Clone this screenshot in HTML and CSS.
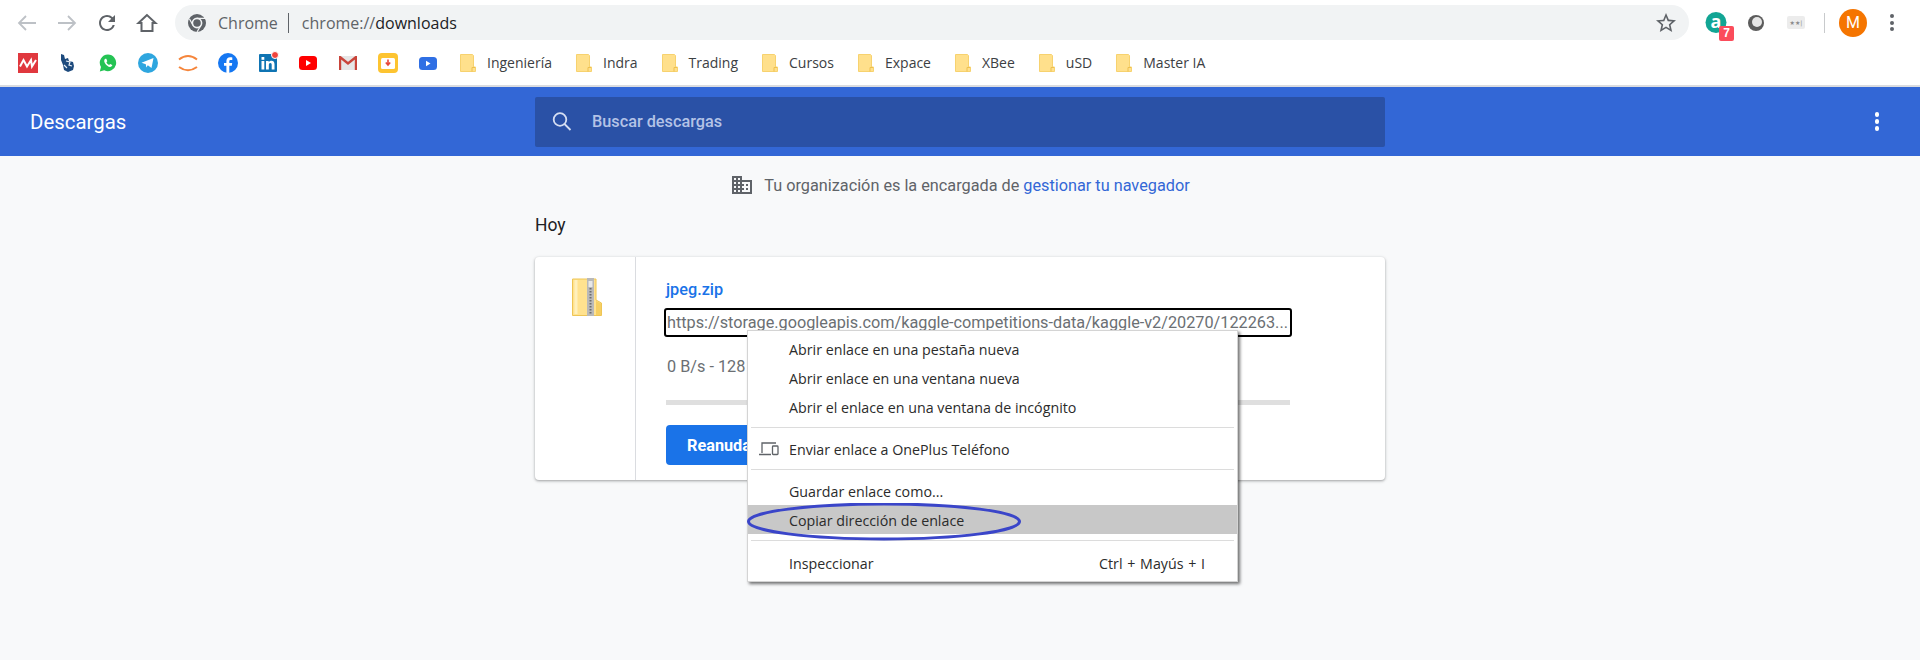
FILE: index.html
```html
<!DOCTYPE html>
<html lang="es">
<head>
  <meta charset="UTF-8" />
  <title>Descargas</title>
  <link rel="stylesheet" href="styles.css">
</head>
<body>
  <div class="toolbar">
    <div class="nav-btn"><svg width="24" height="24" viewBox="0 0 24 24" class="line-off"><path d="M21 12H4M11 5l-7 7 7 7"/></svg></div>
    <div class="nav-btn"><svg width="24" height="24" viewBox="0 0 24 24" class="line-off"><path d="M3 12h17M13 5l7 7-7 7"/></svg></div>
    <div class="nav-btn"><svg width="24" height="24" viewBox="0 0 24 24" fill="#5f6368"><path d="M17.65 6.35A7.958 7.958 0 0 0 12 4c-4.42 0-7.99 3.58-7.99 8s3.57 8 7.99 8c3.73 0 6.84-2.55 7.73-6h-2.08A5.99 5.99 0 0 1 12 18c-3.31 0-6-2.69-6-6s2.69-6 6-6c1.66 0 3.14.69 4.22 1.78L13 11h7V4l-2.35 2.35z"/></svg></div>
    <div class="nav-btn"><svg width="24" height="24" viewBox="0 0 24 24" class="line-on"><path d="M12 4L3.5 12H6.5V20H17.5V12H20.5Z"/></svg></div>

    <div class="omnibox">
      <svg width="20" height="20" viewBox="0 0 20 20"><circle cx="10" cy="10" r="9" fill="#5f6368"/><circle cx="10" cy="10" r="4.6" fill="none" stroke="#f1f3f4" stroke-width="1.6"/><path d="M10 5.4h8M6 12.3L2.5 6M13.9 12.4L10 19" stroke="#f1f3f4" stroke-width="1.2"/></svg>
      <span class="omni-chip">Chrome</span>
      <span class="omni-sep"></span>
      <span class="omni-url">chrome://<b>downloads</b></span>
      <svg class="omni-star" width="24" height="24" viewBox="0 0 24 24" fill="#5f6368"><path d="M22 9.24l-7.19-.62L12 2 9.19 8.63 2 9.24l5.46 4.73L5.82 21 12 17.27 18.18 21l-1.63-7.03L22 9.24zM12 15.4l-3.76 2.27 1-4.28-3.32-2.88 4.38-.38L12 6.1l1.71 4.04 4.38.38-3.32 2.88 1 4.28L12 15.4z"/></svg>
    </div>

    <div class="ext">
      <svg width="24" height="24" viewBox="0 0 24 24"><circle cx="12" cy="11.500" r="10.500" fill="#12a594"/><text x="12" y="16.500" text-anchor="middle" class="ext-a">a</text></svg>
      <span class="ext-badge">7</span>
    </div>
    <div class="ext">
      <svg width="20" height="20" viewBox="0 0 20 20"><circle cx="10" cy="10" r="8" fill="#5c5c5c"/><circle cx="11" cy="9" r="5" fill="#e6e6e6"/></svg>
    </div>
    <div class="ext">
      <span class="ext-rate">★★|</span>
    </div>
    <span class="tool-sep"></span>
    <span class="avatar">M</span>
    <div class="dots-dark"><i></i><i></i><i></i></div>
  </div>

  <div class="bookmarks">
    <div class="bm"><svg width="20" height="20" viewBox="0 0 20 20"><rect width="20" height="20" fill="#e0383e"/><path d="M2 13.500L5.500 7 9 13.500 13 7l1 6.500L18 7" fill="none" stroke="#fff" stroke-width="2"/></svg></div>
    <div class="bm"><svg width="20" height="20" viewBox="0 0 20 20"><path d="M3 1l3 1 1 4 3-1 1 3 4 1 1 4-1 4-5 2-4-2-1-5-2-5z" fill="#1d4a7d"/><path d="M8 8l4 1-1 3 3 1M6 12l3 3" stroke="#e8eef5" stroke-width="1.2" fill="none"/></svg></div>
    <div class="bm"><svg width="20" height="20" viewBox="0 0 20 20"><path d="M10 1.500a8.300 8.300 0 0 0-7 12.600L1.800 18.500l4.500-1.200A8.300 8.300 0 1 0 10 1.500z" fill="#25c354"/><path d="M7.300 5.800c-1.400.8-1.400 2.700-.3 4.500 1.200 2 3.200 3.700 5 3.700 1.300 0 2.300-.8 2.300-1.900l-2.200-1.200-1 1c-1-.3-2.200-1.500-2.700-2.700l.9-1L8.300 5.800z" fill="#fff"/></svg></div>
    <div class="bm"><svg width="20" height="20" viewBox="0 0 20 20"><circle cx="10" cy="10" r="10" fill="#2ea6df"/><path d="M3.500 9.800L15.500 5 13.500 15 9.800 12.300 8.300 14.500 7.800 11.300z" fill="#fff"/></svg></div>
    <div class="bm"><svg width="20" height="20" viewBox="0 0 20 20" fill="none" stroke="#f5853b" stroke-width="2"><path d="M1 6.500Q10 -.5 19 6.500M1 14Q10 20.500 19 14"/></svg></div>
    <div class="bm"><svg width="20" height="20" viewBox="0 0 20 20"><circle cx="10" cy="10" r="10" fill="#1577f2"/><path d="M11.300 20v-7.200h2.500l.4-2.800h-2.900V8.300c0-.9.4-1.400 1.500-1.400h1.500V4.400c-.5-.1-1.300-.2-2.200-.2-2.200 0-3.700 1.300-3.700 3.800V10H6v2.800h2.400V20z" fill="#fff"/></svg></div>
    <div class="bm"><span class="bm-rel"><svg width="18" height="18" viewBox="0 0 18 18"><rect width="18" height="18" rx="1" fill="#0f74b3"/><rect x="2.500" y="7" width="2.800" height="8.500" fill="#fff"/><rect x="2.500" y="3" width="2.800" height="2.800" fill="#fff"/><path d="M7 7h2.700v1.300C10.300 7.300 11.300 6.800 12.500 6.800c2.200 0 3 1.400 3 3.700v5h-2.800V11c0-1.200-.4-1.900-1.400-1.900S9.800 9.900 9.800 11v4.500H7z" fill="#fff"/></svg><i class="bm-dot"></i></span></div>
    <div class="bm"><svg width="18" height="14" viewBox="0 0 18 14"><rect width="18" height="14" rx="3.500" fill="#f00"/><path d="M7 4l5 3-5 3z" fill="#fff"/></svg></div>
    <div class="bm"><svg width="18" height="14" viewBox="0 0 18 14"><rect width="18" height="14" fill="#e6e6e6"/><path d="M1 14V1l8 6.500L17 1v13" fill="none" stroke="#c9443a" stroke-width="2.400"/></svg></div>
    <div class="bm"><svg width="20" height="20" viewBox="0 0 20 20"><rect width="20" height="20" rx="4" fill="#fdc431"/><rect x="3" y="5" width="14" height="11" rx="1.500" fill="#fff"/><path d="M10 6.500v4.500M7.800 9.500l2.200 2.500 2.200-2.500" fill="none" stroke="#e8483a" stroke-width="1.600"/></svg></div>
    <div class="bm"><svg width="18" height="13" viewBox="0 0 18 13"><rect width="18" height="13" rx="3.500" fill="#2f6fe4"/><path d="M7 3.800l4.500 2.700L7 9.200z" fill="#fff"/></svg></div>

    <div class="bm-folder"><svg class="folder" width="16" height="18" viewBox="0 0 16 18"><use href="#folder-shape"/></svg><span class="bm-label">Ingeniería</span></div>
    <div class="bm-folder"><svg class="folder" width="16" height="18" viewBox="0 0 16 18"><use href="#folder-shape"/></svg><span class="bm-label">Indra</span></div>
    <div class="bm-folder"><svg class="folder" width="16" height="18" viewBox="0 0 16 18"><use href="#folder-shape"/></svg><span class="bm-label">Trading</span></div>
    <div class="bm-folder"><svg class="folder" width="16" height="18" viewBox="0 0 16 18"><use href="#folder-shape"/></svg><span class="bm-label">Cursos</span></div>
    <div class="bm-folder"><svg class="folder" width="16" height="18" viewBox="0 0 16 18"><use href="#folder-shape"/></svg><span class="bm-label">Expace</span></div>
    <div class="bm-folder"><svg class="folder" width="16" height="18" viewBox="0 0 16 18"><use href="#folder-shape"/></svg><span class="bm-label">XBee</span></div>
    <div class="bm-folder"><svg class="folder" width="16" height="18" viewBox="0 0 16 18"><use href="#folder-shape"/></svg><span class="bm-label">uSD</span></div>
    <div class="bm-folder"><svg class="folder" width="16" height="18" viewBox="0 0 16 18"><use href="#folder-shape"/></svg><span class="bm-label">Master IA</span></div>
  </div>

  <svg width="0" height="0" class="defs">
    <g id="folder-shape">
      <path d="M.5.500h12l1 1V13h2v4.500H.5z" fill="#ffe08c" stroke="#f7d26f"/>
      <path d="M12 17.500V13.500h3" fill="none" stroke="#eec04f"/>
    </g>
  </svg>

  <header class="dl-header">
    <div class="dl-title">Descargas</div>
    <div class="dl-search">
      <svg width="22" height="22" viewBox="0 0 22 22" fill="none" stroke="#d5def2" stroke-width="1.800"><circle cx="9" cy="8.500" r="6.300"/><path d="M13.500 13l6 6"/></svg>
      <span>Buscar descargas</span>
    </div>
    <div class="dots-light"><i></i><i></i><i></i></div>
  </header>

  <main class="dl-main">
    <div class="managed">
      <svg width="24" height="24" viewBox="0 0 24 24" fill="#5f6368"><path d="M12 7V3H2v18h20V7H12zM6 19H4v-2h2v2zm0-4H4v-2h2v2zm0-4H4V9h2v2zm0-4H4V5h2v2zm4 12H8v-2h2v2zm0-4H8v-2h2v2zm0-4H8V9h2v2zm0-4H8V5h2v2zm10 12h-8v-2h2v-2h-2v-2h2v-2h-2V9h8v10zm-2-8h-2v2h2v-2zm0 4h-2v2h2v-2z"/></svg>
      <span>Tu organización es la encargada de <a href="#">gestionar tu navegador</a></span>
    </div>

    <h2 class="day">Hoy</h2>

    <div class="card">
      <div class="card-icon">
        <svg width="30" height="38" viewBox="0 0 30 38">
          <path d="M.5 1h23.500v21l5.500 3v12.500H.5z" fill="#ffe28f" stroke="#eec555"/>
          <path d="M4 2v34" stroke="#fff0bd" stroke-width="3"/>
          <path d="M24 23l5 2.500v11.500h-5z" fill="#f6cf62"/>
          <rect x="15" y="0" width="7" height="38" fill="#b9b9b9"/>
          <rect x="16.500" y="3" width="4" height="6" fill="#e8e8e8"/>
          <path d="M18.500 10v27" stroke="#6d6d6d" stroke-width="2" stroke-dasharray="1.500 1.500"/>
        </svg>
      </div>
      <div class="card-body">
        <a class="file-name" href="#">jpeg.zip</a>
        <div class="file-url">https://storage.googleapis.com/kaggle-competitions-data/kaggle-v2/20270/122263...</div>
        <div class="file-status">0 B/s - 128 MB de 1,9 GB</div>
        <div class="progress"></div>
        <button class="resume">Reanudar</button>
      </div>
    </div>
  </main>

  <div class="ctx-menu">
    <div class="ctx-item">Abrir enlace en una pestaña nueva</div>
    <div class="ctx-item">Abrir enlace en una ventana nueva</div>
    <div class="ctx-item">Abrir el enlace en una ventana de incógnito</div>
    <div class="ctx-sep"></div>
    <div class="ctx-item">
      <svg class="ctx-icon" width="20" height="16" viewBox="0 0 20 16" fill="none" stroke="#5f6368" stroke-width="1.300"><path d="M3 12V2h14M0 13.500h12"/><rect x="13.500" y="5" width="5.500" height="8.500" rx=".8"/></svg>
      Enviar enlace a OnePlus Teléfono
    </div>
    <div class="ctx-sep"></div>
    <div class="ctx-item">Guardar enlace como...</div>
    <div class="ctx-item ctx-active">Copiar dirección de enlace</div>
    <div class="ctx-sep"></div>
    <div class="ctx-item ctx-split"><span>Inspeccionar</span><span class="ctx-keys">Ctrl + Mayús + I</span></div>
    <svg class="ctx-mark" width="276" height="40" viewBox="0 0 276 40"><ellipse cx="137" cy="18.500" rx="135.500" ry="17.500" fill="none" stroke="#3a45c9" stroke-width="3"/></svg>
  </div>
</body>
</html>
```

FILE: styles.css
```css
html, body {
  margin: 0;
  height: 660px;
  overflow: hidden;
}
body {
  background: #f8f9fa;
  font-family: "Open Sans", sans-serif;
  color: #202124;
  position: relative;
}
svg {
  display: block;
  flex: none;
}
.defs {
  position: absolute;
}

/* barra de chrome */
.toolbar {
  height: 45px;
  background: #fff;
  display: flex;
  align-items: center;
  padding: 0 26px 0 7px;
}
.nav-btn {
  width: 40px;
  height: 40px;
  display: flex;
  align-items: center;
  justify-content: center;
}
.line-off path, .line-on path {
  fill: none;
  stroke-width: 1.8;
}
.line-off path {
  stroke: #bdc1c6;
}
.line-on path {
  stroke: #5f6368;
  stroke-width: 2;
}
.omnibox {
  flex: 1;
  height: 35px;
  margin: 0 7px 0 8px;
  background: #f1f3f4;
  border-radius: 18px;
  display: flex;
  align-items: center;
  padding-left: 12px;
  font-size: 16px;
}
.omni-chip {
  margin-left: 11px;
  color: #5f6368;
}
.omni-sep {
  width: 1px;
  height: 20px;
  background: #5f6368;
  margin: 0 13px 0 10px;
}
.omni-url {
  color: #5f6368;
}
.omni-url b {
  font-weight: 400;
  color: #202124;
}
.omni-star {
  margin-left: auto;
  margin-right: 11px;
}
.ext {
  width: 40px;
  height: 40px;
  display: flex;
  align-items: center;
  justify-content: center;
  position: relative;
}
.ext-a {
  font-family: "Open Sans", sans-serif;
  font-size: 18px;
  font-weight: 700;
  fill: #fff;
}
.ext-badge {
  position: absolute;
  left: 23px;
  top: 23px;
  width: 15px;
  height: 15px;
  border-radius: 2px;
  background: #fb4c5b;
  color: #fff;
  font: 700 12px/15px "Liberation Sans", sans-serif;
  text-align: center;
}
.ext-rate {
  width: 18px;
  height: 13px;
  background: #ececec;
  border-radius: 2px;
  color: #8a8a8a;
  font: 6px/13px "DejaVu Sans", sans-serif;
  text-align: center;
  white-space: nowrap;
}
.tool-sep {
  width: 1px;
  height: 20px;
  background: #c8cacc;
  margin: 0 14px 0 8px;
}
.avatar {
  width: 28px;
  height: 28px;
  border-radius: 50%;
  background: #f57500;
  color: #fff;
  font: 16px/28px Roboto, sans-serif;
  text-align: center;
}
.dots-dark, .dots-light {
  display: flex;
  flex-direction: column;
}
.dots-dark {
  margin-left: 23px;
  gap: 2.500px;
}
.dots-dark i {
  width: 4px;
  height: 4px;
  border-radius: 50%;
  background: #5f6368;
}

/* marcadores */
.bookmarks {
  height: 36px;
  padding: 0 0 4px 8px;
  background: #fff;
  display: flex;
  align-items: center;
  font-size: 14px;
  color: #3c4043;
}
.bm {
  width: 40px;
  display: flex;
  justify-content: center;
}
.bm-rel {
  position: relative;
}
.bm-dot {
  position: absolute;
  right: -2px;
  top: -3px;
  width: 6px;
  height: 6px;
  border-radius: 50%;
  background: #f0443c;
  border: 1px solid #fff;
}
.bm-folder {
  display: flex;
  align-items: center;
  padding: 0 12px;
  gap: 11px;
}
.bm-label {
  padding-bottom: 2px;
}

/* cabecera descargas */
.dl-header {
  border-top: 2px solid #dadce0;
  height: 69px;
  background: #3367d6;
  display: flex;
  align-items: center;
  justify-content: space-between;
  padding: 0 41px 0 30px;
}
.dl-title {
  width: 505px;
  color: #fff;
  font: 20.400px Roboto, sans-serif;
}
.dl-search {
  width: 850px;
  height: 50px;
  box-sizing: border-box;
  background: #2a51a6;
  border-radius: 2px;
  display: flex;
  align-items: center;
  padding-left: 16px;
  gap: 19px;
  color: #b4c3e6;
  font: 500 16.250px Roboto, sans-serif;
  margin-right: auto;
}
.dots-light {
  gap: 2.500px;
}
.dots-light i {
  width: 4.500px;
  height: 4.500px;
  border-radius: 50%;
  background: #fff;
}

/* contenido */
.dl-main {
  width: 850px;
  margin: 0 auto;
  font-family: Roboto, sans-serif;
}
.managed {
  height: 58px;
  display: flex;
  align-items: center;
  justify-content: center;
  gap: 10px;
  font-size: 16.250px;
  color: #5f6368;
}
.managed a {
  color: #3367d6;
  text-decoration: none;
}
.day {
  margin: 0;
  height: 43px;
  font-size: 17.500px;
  font-weight: 400;
  line-height: 22px;
  color: #202124;
}
.card {
  height: 223px;
  background: #fff;
  border-radius: 4px;
  box-shadow: 0 1px 2px rgba(60, 64, 67, .3), 0 1px 3px 1px rgba(60, 64, 67, .15);
  display: flex;
}
.card-icon {
  border-right: 1px solid #dadce0;
  padding: 21px 0 0 37px;
  box-sizing: border-box;
  flex: none;
  width: 101px;
}
.card-body {
  padding: 22px 0 0 30px;
  width: 640px;
}
.file-name {
  display: block;
  height: 29px;
  line-height: 22px;
  font-size: 16.250px;
  font-weight: 500;
  color: #1a73e8;
  text-decoration: none;
}
.file-url {
  width: 628px;
  height: 29px;
  margin-left: -2px;
  box-sizing: border-box;
  border: 2px solid #000;
  border-radius: 3px;
  font: 16.250px/25px Roboto, sans-serif;
  color: #6b6f73;
  white-space: nowrap;
  overflow: hidden;
  padding-left: 1px;
}
.file-status {
  margin-top: 20px;
  height: 20px;
  line-height: 20px;
  font-size: 16.250px;
  color: #6b6f73;
  padding-left: 1px;
}
.progress {
  margin-top: 23px;
  height: 5px;
  width: 624px;
  background: #dfdfdf;
}
.resume {
  display: block;
  margin-top: 20px;
  height: 40px;
  border: 0;
  border-radius: 4px;
  background: #1a73e8;
  color: #fff;
  font: 700 16.250px Roboto, sans-serif;
  padding: 0 21px;
}

/* menu contextual */
.ctx-menu {
  position: absolute;
  left: 747px;
  top: 330px;
  width: 491px;
  height: 252px;
  box-sizing: border-box;
  background: #fff;
  border: 1px solid #d4d4d4;
  box-shadow: 2px 2px 3px rgba(0, 0, 0, .55);
  padding: 3px 0 5px;
  font-size: 14.250px;
  color: #2b2b2b;
}
.ctx-item {
  height: 29px;
  box-sizing: border-box;
  display: flex;
  align-items: center;
  padding: 2px 0 0 41px;
  position: relative;
  white-space: nowrap;
}
.ctx-icon {
  position: absolute;
  left: 11px;
  top: 7px;
}
.ctx-active {
  background: #c8c8c8;
}
.ctx-split {
  justify-content: space-between;
  padding: 4px 32px 0 41px;
}
.ctx-keys {
  word-spacing: 1px;
}
.ctx-sep {
  height: 1px;
  margin: 6px 3px;
  background: #dcdcdc;
}
.ctx-mark {
  position: absolute;
  left: -1px;
  top: 172px;
}
```
